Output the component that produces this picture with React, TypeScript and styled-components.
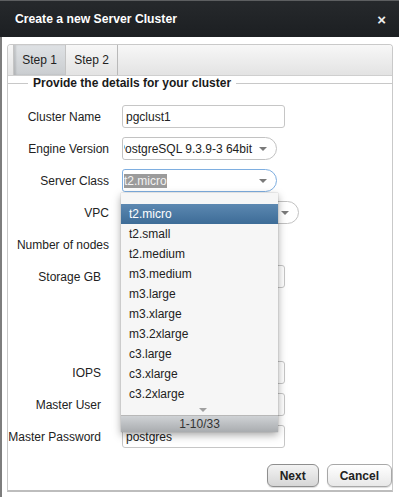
import styled, { createGlobalStyle } from 'styled-components';

const GlobalStyle = createGlobalStyle`
  html, body {
    margin: 0;
    padding: 0;
    background: #fff;
  }
  body {
    font-family: "Liberation Sans", Arial, Helvetica, sans-serif;
    font-size: 12px;
    color: #222;
  }
`;

const Dialog = styled.div`
  width: 399px;
  height: 497px;
  overflow: hidden;
  background: #fff;
`;

const TitleBar = styled.div`
  height: 37px;
  box-sizing: border-box;
  border-top: 1px solid #5d5f61;
  background: linear-gradient(#26292c, #1c1f22);
  display: flex;
  align-items: center;
  justify-content: space-between;
  padding: 0 13px 0 15px;
  color: #fff;
  font-weight: bold;
  font-size: 12.2px;
`;

const Close = styled.span`
  font-size: 15px;
  color: #eee;
`;

const Body = styled.div`
  height: 460px;
  box-sizing: border-box;
  border-left: 2px solid #7d7d7d;
  padding: 7px 6px 0 5px;
`;

const Panel = styled.div`
  border: 1px solid #c9c9c9;
  border-bottom: 2px solid #bdbdbd;
  border-radius: 4px 4px 0 0;
`;

const TabBar = styled.div`
  display: flex;
  height: 30px;
  padding-left: 5px;
  background: linear-gradient(#f7f7f7, #e3e3e3);
  border-bottom: 1px solid #cfcfcf;
  border-radius: 3px 3px 0 0;
`;

const Tab = styled.div<{ $active?: boolean }>`
  width: 52px;
  box-sizing: border-box;
  display: flex;
  align-items: center;
  justify-content: center;
  border-left: 1px solid #c4c4c4;
  color: #222;
  background: ${(p) => (p.$active ? 'linear-gradient(#dfe2e5, #cacdd0)' : 'transparent')};
  box-shadow: ${(p) => (p.$active ? 'inset 2px 0 2px rgba(0,0,0,0.12)' : 'none')};

  &:last-child {
    width: 53px;
    border-right: 1px solid #b9b9b9;
  }
`;

const Legend = styled.div`
  display: flex;
  align-items: center;
  height: 14px;
  font-weight: bold;
  color: #1a1a1a;

  &::before,
  &::after {
    content: '';
    height: 1px;
    background: #c8c8c8;
  }
  &::before {
    width: 20px;
  }
  &::after {
    flex: 1;
  }

  span {
    padding: 0 5px;
  }
`;

const Form = styled.div`
  display: grid;
  grid-template-columns: 101px auto;
  grid-auto-rows: 23px;
  column-gap: 13px;
  row-gap: 9px;
  margin-top: 15px;
  align-items: center;
`;

const Label = styled.div<{ $inset?: boolean }>`
  text-align: right;
  white-space: nowrap;
  padding-right: ${(p) => (p.$inset ? '8px' : '0')};
`;

const Input = styled.input<{ $width?: number }>`
  width: ${(p) => p.$width ?? 163}px;
  height: 23px;
  box-sizing: border-box;
  border: 1px solid #c6c6c6;
  border-radius: 3px;
  padding: 0 3px;
  font: inherit;
  color: #222;
  background: #fff;
  outline: none;
`;

const Select = styled.div<{ $width: number; $focused?: boolean }>`
  position: relative;
  width: ${(p) => p.$width}px;
  height: 23px;
  box-sizing: border-box;
  border: 1px solid ${(p) => (p.$focused ? '#7eaee0' : '#c2c2c2')};
  border-radius: 3px 12px 12px 3px;
  display: flex;
  align-items: center;
  padding: 0 9px 0 1px;
  background: #fff;
`;

const SelectText = styled.div`
  flex: 1;
  overflow: hidden;
  white-space: nowrap;
`;

const Shifted = styled.span<{ $shift: number }>`
  display: inline-block;
  margin-left: ${(p) => p.$shift}px;
`;

const Highlighted = styled.span`
  background: #9b9b9b;
  color: #f2f2f2;
  padding: 1px 0;
`;

const Caret = styled.span<{ $color?: string }>`
  width: 0;
  height: 0;
  border-left: 4px solid transparent;
  border-right: 4px solid transparent;
  border-top: 4px solid ${(p) => p.$color ?? '#7a7a7a'};
  margin-left: 6px;
`;

const Dropdown = styled.div`
  position: absolute;
  top: 23px;
  left: -2px;
  width: 157px;
  z-index: 10;
  background: #f6f6f6;
  box-shadow: 0 3px 8px rgba(0, 0, 0, 0.35), 0 0 1px rgba(0, 0, 0, 0.3);
  padding-top: 11px;
`;

const Option = styled.div<{ $active?: boolean }>`
  height: 20px;
  line-height: 20px;
  padding-left: 8px;
  color: ${(p) => (p.$active ? '#fff' : '#222')};
  background: ${(p) => (p.$active ? 'linear-gradient(#5c88b1, #3d6c97)' : 'none')};
`;

const More = styled.div`
  height: 11px;
  display: flex;
  justify-content: center;
  align-items: center;
`;

const Pager = styled.div`
  height: 17px;
  line-height: 17px;
  text-align: center;
  color: #333;
  background: linear-gradient(#cfd2d5, #a9acaf);
  border-top: 1px solid #b8b8b8;
  box-sizing: border-box;
`;

const ButtonRow = styled.div`
  display: flex;
  justify-content: flex-end;
  gap: 8px;
  margin: 16px 0 3px;
`;

const Button = styled.button<{ $primary?: boolean }>`
  height: 23px;
  padding: 0 12px;
  font: inherit;
  font-weight: bold;
  color: #222;
  border-radius: 6px;
  border: 1px solid ${(p) => (p.$primary ? '#8e8e8e' : '#a8a8a8')};
  background: ${(p) =>
    p.$primary ? 'linear-gradient(#f3f3f3, #d6d6d6)' : 'linear-gradient(#ffffff, #e8e8e8)'};
  box-shadow: 0 1px 1px rgba(0, 0, 0, 0.15);
`;

const instanceClasses = [
  't2.micro',
  't2.small',
  't2.medium',
  'm3.medium',
  'm3.large',
  'm3.xlarge',
  'm3.2xlarge',
  'c3.large',
  'c3.xlarge',
  'c3.2xlarge',
];

export default function App() {
  return (
    <Dialog>
      <GlobalStyle />
      <TitleBar>
        <span>Create a new Server Cluster</span>
        <Close>×</Close>
      </TitleBar>
      <Body>
        <Panel>
          <TabBar>
            <Tab $active>Step 1</Tab>
            <Tab>Step 2</Tab>
          </TabBar>
          <Legend>
            <span>Provide the details for your cluster</span>
          </Legend>
          <Form>
            <Label $inset>Cluster Name</Label>
            <Input readOnly defaultValue="pgclust1" />

            <Label>Engine Version</Label>
            <Select $width={155}>
              <SelectText>
                <Shifted $shift={-7}>PostgreSQL 9.3.9-3 64bit</Shifted>
              </SelectText>
              <Caret />
            </Select>

            <Label>Server Class</Label>
            <Select $width={155} $focused>
              <SelectText>
                <Highlighted>t2.micro</Highlighted>
              </SelectText>
              <Caret />
              <Dropdown>
                {instanceClasses.map((name, i) => (
                  <Option key={name} $active={i === 0}>
                    {name}
                  </Option>
                ))}
                <More>
                  <Caret $color="#a0a0a0" />
                </More>
                <Pager>1-10/33</Pager>
              </Dropdown>
            </Select>

            <Label>VPC</Label>
            <Select $width={177}>
              <SelectText />
              <Caret />
            </Select>

            <Label>Number of nodes</Label>
            <Input readOnly $width={60} />

            <Label $inset>Storage GB</Label>
            <Input readOnly />

            <Label />
            <div />

            <Label />
            <div />

            <Label $inset>IOPS</Label>
            <Input readOnly />

            <Label $inset>Master User</Label>
            <Input readOnly />

            <Label $inset>Master Password</Label>
            <Input readOnly defaultValue="postgres" />
          </Form>
          <ButtonRow>
            <Button $primary>Next</Button>
            <Button>Cancel</Button>
          </ButtonRow>
        </Panel>
      </Body>
    </Dialog>
  );
}
